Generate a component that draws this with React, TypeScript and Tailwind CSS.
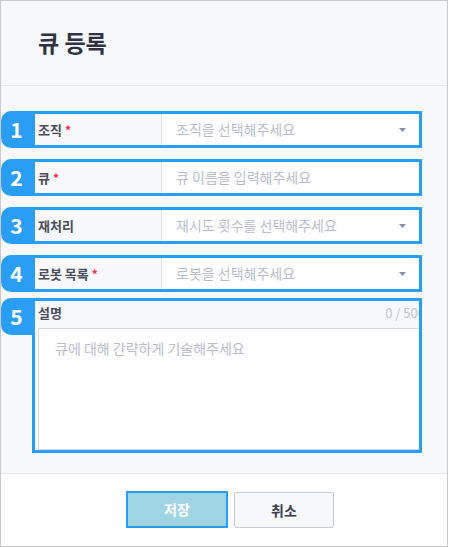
import React from 'react';

const font = { fontFamily: '"Noto Sans CJK KR", "Noto Sans", sans-serif' };

type Field = {
  no: number;
  label: string;
  required?: boolean;
  placeholder: string;
  select?: boolean;
};

const fields: Field[] = [
  { no: 1, label: '조직', required: true, placeholder: '조직을 선택해주세요', select: true },
  { no: 2, label: '큐', required: true, placeholder: '큐 이름을 입력해주세요' },
  { no: 3, label: '재처리', placeholder: '재시도 횟수를 선택해주세요', select: true },
  { no: 4, label: '로봇 목록', required: true, placeholder: '로봇을 선택해주세요', select: true },
];

const Badge: React.FC<{ no: number }> = ({ no }) => (
  <div className="w-[31px] h-[37px] shrink-0 bg-[#2a9df4] rounded-l-[10px] flex items-center justify-center text-white font-bold text-[21px]">
    {no}
  </div>
);

const Caret = () => (
  <svg width="7" height="4" viewBox="0 0 7 4" className="mr-[13px]">
    <path d="M0 0 H7 L3.5 4 Z" fill="#8d93ab" />
  </svg>
);

export default function App() {
  return (
    <div style={font} className="w-[448px] h-[547px] border border-[#c9c9c9] bg-white flex flex-col overflow-hidden">
      <div className="h-[85px] shrink-0 bg-[#f7f8fc] border-b border-[#e4e6ee] flex items-center pl-[37px]">
        <h1 className="text-[23px] font-bold text-[#2f3241] -mt-[1px]">큐 등록</h1>
      </div>

      <div className="flex-1 bg-[#f7f8fc] border-b border-[#e4e6ee] pt-[25px] flex flex-col gap-[11px]">
        {fields.map((f) => (
          <div key={f.no} className="flex w-[421px]">
            <Badge no={f.no} />
            <div className="flex-1 h-[37px] border-[3px] border-[#2a9df4] flex overflow-hidden">
              <div className="w-[127px] shrink-0 pl-[3px] flex items-center text-[13px] font-bold text-[#4a4d5a] border-r border-[#dde0e8]">
                {f.label}
                {f.required && <span className="text-[#f0284a] ml-[3px] text-[12px]">*</span>}
              </div>
              <div className="flex-1 bg-white flex items-center justify-between pl-[14px] text-[14px] text-[#b9bdca]">
                <span>{f.placeholder}</span>
                {f.select && <Caret />}
              </div>
            </div>
          </div>
        ))}

        <div className="flex w-[421px] -mt-[5px]">
          <Badge no={5} />
          <div className="flex-1 h-[155px] border-[3px] border-[#2a9df4] flex flex-col overflow-hidden">
            <div className="h-[27px] shrink-0 pl-[3px] flex items-center justify-between text-[13px]">
              <span className="font-bold text-[#4a4d5a] -mt-[4px]">설명</span>
              <span className="text-[#c0c3ce] -mr-[6px] -mt-[4px] whitespace-nowrap">0 / 500</span>
            </div>
            <div className="flex-1 ml-[3px] -mr-[6px] bg-white border border-[#d6d9e2] pl-[16px] pt-[9px] text-[14px] text-[#b9bdca]">
              큐에 대해 간략하게 기술해주세요
            </div>
          </div>
        </div>
      </div>

      <div className="h-[72px] shrink-0 bg-white flex justify-center gap-[6px] pl-[12px] pt-[17px]">
        <button className="w-[102px] h-[37px] bg-[#9fd5e2] border-[2px] border-[#2a9df4] text-white font-bold text-[14px]">
          저장
        </button>
        <button className="w-[100px] h-[36px] mt-[1px] bg-[#f7f8fc] border border-[#c7cad8] rounded-[2px] text-[#3a3d4a] font-bold text-[14px]">
          취소
        </button>
      </div>
    </div>
  );
}
